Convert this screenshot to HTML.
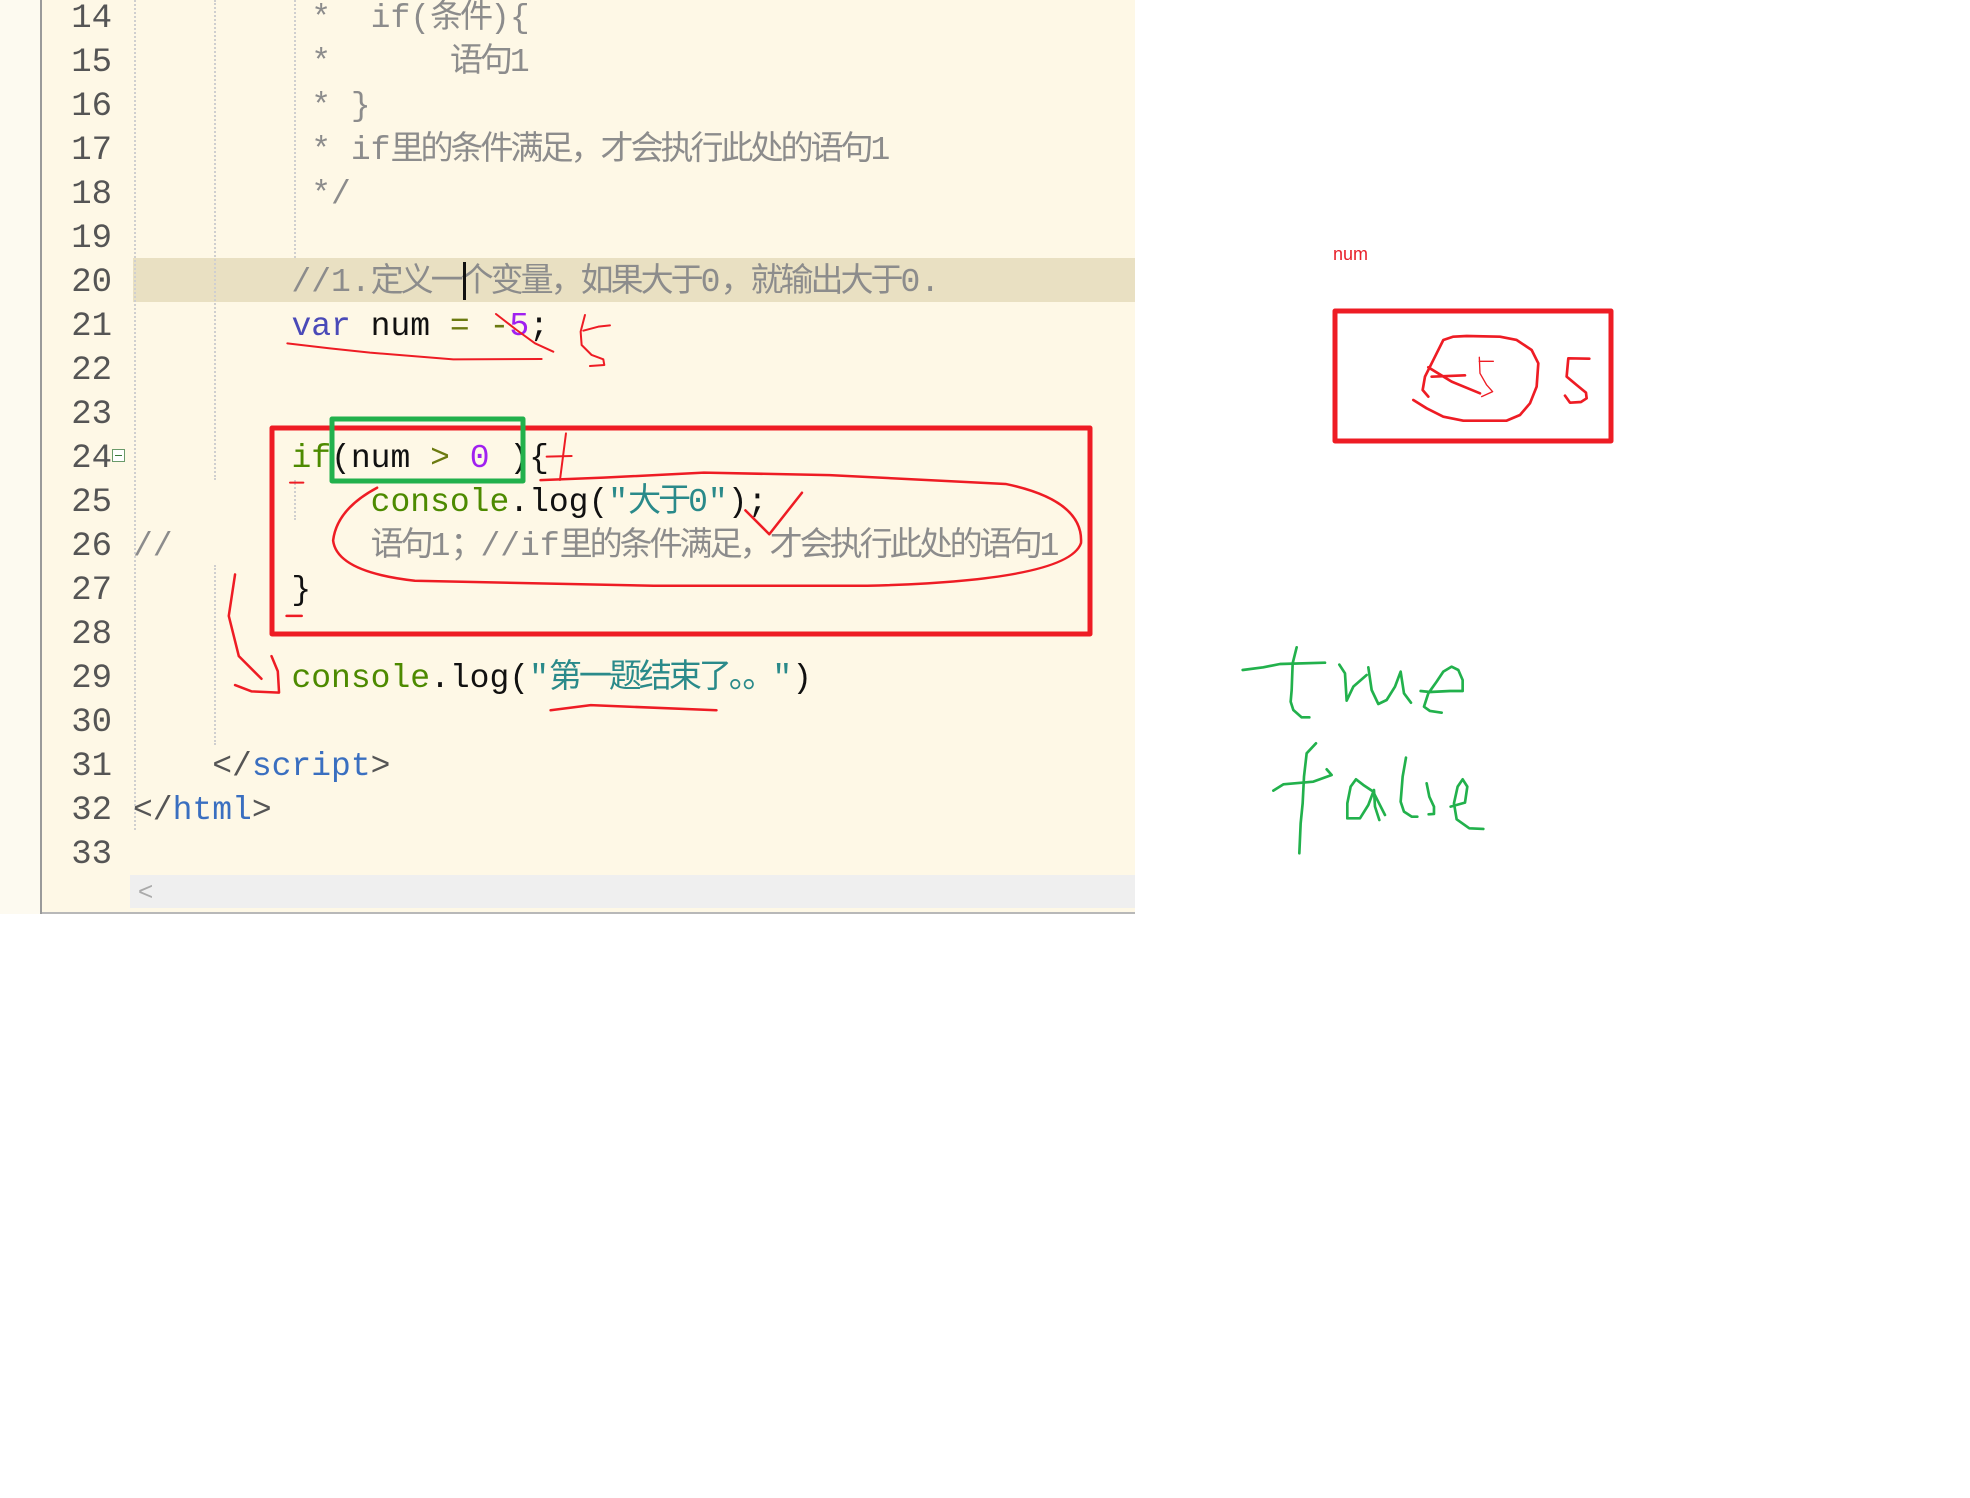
<!DOCTYPE html>
<html><head><meta charset="utf-8">
<style>
html,body{margin:0;padding:0;background:#fff;}
body{width:1970px;height:1498px;position:relative;overflow:hidden;}
#ed{position:absolute;left:0;top:0;width:1135px;height:912px;background:#fef8e6;border-bottom:2px solid #b8b8b8;}
#lstrip{position:absolute;left:0;top:0;width:40px;height:914px;background:#fdfaf0;border-right:2px solid #9a9a9a;}
.ln{position:absolute;left:44px;width:68px;text-align:right;font-family:"Liberation Mono",monospace;font-size:34px;color:#555;line-height:44px;height:44px;margin-top:3px;}
.cl{position:absolute;left:133px;white-space:pre;font-family:"Liberation Mono","Noto Sans CJK SC",monospace;font-size:33px;line-height:44px;height:44px;color:#111;margin-top:3px;}
.z{letter-spacing:-3px;font-family:"Noto Sans CJK SC",sans-serif;line-height:0;}
.cm{color:#8c8c8c}
.kw{color:#4a4ab8}
.op{color:#6b7a10}
.nu{color:#a020f0}
.fn{color:#4d8a00}
.st{color:#2a8a8a}
.tg{color:#555}
.tn{color:#3a6fc0}
.guide{position:absolute;width:0;border-left:2px dotted #cfcfcf;}
#hl{position:absolute;left:133px;top:258px;width:1002px;height:44px;background:#e9e0c2;}
#sb{position:absolute;left:130px;top:875px;width:1005px;height:33px;background:#efefef;}
#sb span{position:absolute;left:8px;top:0;font-family:"Liberation Sans",sans-serif;font-size:26px;line-height:33px;color:#aaa;}
</style></head><body>
<div id="ed"></div>
<div id="lstrip"></div>
<div id="hl"></div>
<div class="guide" style="left:134px;top:0;height:830px"></div>
<div class="guide" style="left:214px;top:0;height:480px"></div>
<div class="guide" style="left:214px;top:565px;height:180px"></div>
<div class="guide" style="left:294px;top:0;height:258px"></div>
<div class="guide" style="left:294px;top:480px;height:40px"></div>

<div class="ln" style="top:-6px">14</div>
<div class="ln" style="top:38px">15</div>
<div class="ln" style="top:82px">16</div>
<div class="ln" style="top:126px">17</div>
<div class="ln" style="top:170px">18</div>
<div class="ln" style="top:214px">19</div>
<div class="ln" style="top:258px">20</div>
<div class="ln" style="top:302px">21</div>
<div class="ln" style="top:346px">22</div>
<div class="ln" style="top:390px">23</div>
<div class="ln" style="top:434px">24</div>
<div class="ln" style="top:478px">25</div>
<div class="ln" style="top:522px">26</div>
<div class="ln" style="top:566px">27</div>
<div class="ln" style="top:610px">28</div>
<div class="ln" style="top:654px">29</div>
<div class="ln" style="top:698px">30</div>
<div class="ln" style="top:742px">31</div>
<div class="ln" style="top:786px">32</div>
<div class="ln" style="top:830px">33</div>
<div style="position:absolute;left:112px;top:449px;width:11px;height:11px;border:1px solid #6a9a6a;background:#fff;"><div style="position:absolute;left:2px;top:5px;width:7px;height:1px;background:#3a7a3a"></div></div>

<div class="cl cm" style="top:-6px">         *  if(<span class="z">条件</span>){</div>
<div class="cl cm" style="top:38px">         *      <span class="z">语句</span>1</div>
<div class="cl cm" style="top:82px">         * }</div>
<div class="cl cm" style="top:126px">         * if<span class="z">里的条件满足，才会执行此处的语句</span>1</div>
<div class="cl cm" style="top:170px">         */</div>
<div class="cl cm" style="top:258px">        //1.<span class="z">定义一个变量，如果大于</span>0<span class="z">，就输出大于</span>0.</div>
<div style="position:absolute;left:463px;top:262px;width:3px;height:38px;background:#111"></div>
<div class="cl" style="top:302px">        <span class="kw">var</span> num <span class="op">=</span> <span class="op">-</span><span class="nu">5</span>;</div>
<div class="cl" style="top:434px">        <span class="fn">if</span>(num <span class="op">&gt;</span> <span class="nu">0</span> ){</div>
<div class="cl" style="top:478px">            <span class="fn">console</span>.log(<span class="st">"<span class="z">大于</span>0"</span>);</div>
<div class="cl cm" style="top:522px">//          <span class="z">语句</span>1<span class="z">；</span>//if<span class="z">里的条件满足，才会执行此处的语句</span>1</div>
<div class="cl" style="top:566px">        }</div>
<div class="cl" style="top:654px">        <span class="fn">console</span>.log(<span class="st">"<span class="z">第一题结束了。。</span>"</span>)</div>
<div class="cl" style="top:742px">    <span class="tg">&lt;/</span><span class="tn">script</span><span class="tg">&gt;</span></div>
<div class="cl" style="top:786px"><span class="tg">&lt;/</span><span class="tn">html</span><span class="tg">&gt;</span></div>
<div id="sb"><span>&lt;</span></div>

<div style="position:absolute;left:1333px;top:244px;font-family:'Liberation Sans',sans-serif;font-size:18px;color:#e8202a;">num</div>

<svg width="1970" height="1498" style="position:absolute;left:0;top:0" fill="none" stroke-linecap="round" stroke-linejoin="round">
 <rect x="272" y="428" width="818" height="206" stroke="#ee1c24" stroke-width="5"/>
 <rect x="332" y="419" width="191" height="62" stroke="#22b14c" stroke-width="5"/>
 <rect x="1335" y="311" width="276" height="130" stroke="#ee1c24" stroke-width="5"/>
 <g stroke="#ee1c24" stroke-width="2" transform="scale(1.257)">
  <path d="M300,388 Q268,405 265,430 Q268,455 330,462 L520,466 L690,466 Q850,462 860,432 Q862,398 800,385 L660,378 L560,376 L480,380 L430,382"/>
  <path d="M593,406 L612,425 L638,392"/>
  <path d="M438,565 L470,561 L570,565"/>
  <path d="M187,457 L182,490 L190,522 L208,540"/>
  <path d="M187,545 L200,550 L222,551 L221,534 L216,522"/>
  <path d="M228,490 L240,490"/>
 </g>
 <g stroke="#ee1c24" stroke-width="6" transform="translate(270,300) scale(0.3333)">
  <path d="M52,130 L180,145 L300,158 L550,178 L815,177"/>
  <path d="M678,42 L740,90 L795,130 L850,155"/>
  <path d="M945,45 L932,95 L935,135 L965,165 L1000,178 L1003,195 L960,198"/>
  <path d="M940,92 L985,80 L1020,76"/>
  <path d="M888,400 L870,540"/>
  <path d="M830,470 L905,468"/>
  <path d="M60,548 L100,548"/>
 </g>
 <g stroke="#ee1c24" stroke-width="8" transform="translate(1300,230) scale(0.3333)">
  <path d="M340,510 L380,535 L430,560 L490,572 L620,572 L660,555 L690,520 L710,470 L715,400 L695,360 L650,330 L600,320 L500,318 L460,320 L430,330 L410,370 L395,400 L375,440 L368,480 L385,500"/>
  <path d="M385,412 L455,455 L540,490"/>
  <path d="M395,440 L495,436"/>
  <path d="M538,382 L540,430 L560,465 L578,485 L545,500" stroke-width="4"/>
  <path d="M538,394 L580,394" stroke-width="4"/>
  <path d="M868,386 L805,385 L800,440 L830,465 L858,488 L860,505 L843,516 L810,518 L795,497"/>
 </g>
 <g stroke="#22b14c" stroke-width="8" transform="translate(1230,630) scale(0.3333)">
  <path d="M38,120 L100,112 L150,102 L285,98"/>
  <path d="M200,52 L188,100 L185,180 L182,215 L190,240 L215,262 L238,262"/>
  <path d="M328,104 L345,130 L350,212 L370,170 L410,135"/>
  <path d="M415,112 L425,180 L445,222 L470,210 L495,170 L512,125 L522,190 L543,218"/>
  <path d="M572,183 L600,186 L660,183 L698,183 L698,150 L685,120 L665,110 L640,125 L620,155 L595,190 L582,230 L600,243 L635,248"/>
  <path d="M258,340 L230,370 L222,440 L218,520 L212,580 L208,670"/>
  <path d="M130,482 L160,463 L250,455 L305,435 L290,418"/>
  <path d="M430,485 L400,465 L378,448 L362,470 L352,520 L352,565 L390,565 L415,525 L432,480 L435,530 L448,570"/>
  <path d="M432,490 L465,555"/>
  <path d="M528,383 L518,440 L512,515 L522,545 L545,560 L562,560"/>
  <path d="M590,460 L598,500 L612,530 L612,552 L596,553"/>
  <path d="M662,530 L705,518 L712,470 L698,448 L683,470 L672,520 L680,568 L718,595 L760,597"/>
 </g>
</svg>
</body></html>
